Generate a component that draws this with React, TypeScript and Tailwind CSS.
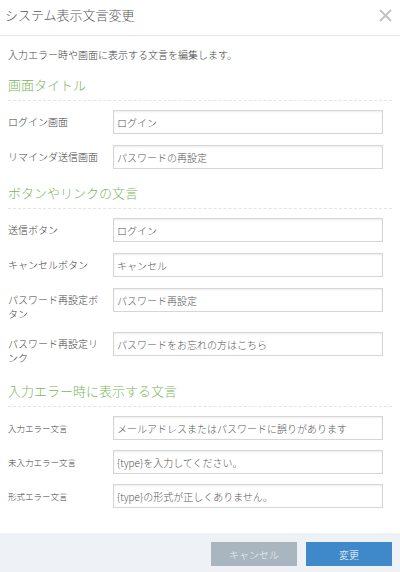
import React from 'react';

type Field = { label: string; value: string };

const screenFields: Field[] = [
  { label: 'ログイン画面', value: 'ログイン' },
  { label: 'リマインダ送信画面', value: 'パスワードの再設定' },
];

const buttonFields: Field[] = [
  { label: '送信ボタン', value: 'ログイン' },
  { label: 'キャンセルボタン', value: 'キャンセル' },
  { label: 'パスワード再設定ボタン', value: 'パスワード再設定' },
  { label: 'パスワード再設定リンク', value: 'パスワードをお忘れの方はこちら' },
];

const errorFields: Field[] = [
  { label: '入力エラー文言', value: 'メールアドレスまたはパスワードに誤りがあります' },
  { label: '未入力エラー文言', value: '{type}を入力してください。' },
  { label: '形式エラー文言', value: '{type}の形式が正しくありません。' },
];

function SectionTitle({ children }: { children: React.ReactNode }) {
  return (
    <h2 className="text-[13px] leading-[20px] font-light text-[#7ab65a] pb-[5px] border-b border-dashed border-[#e4e4e4]">
      {children}
    </h2>
  );
}

function Row({ field, small }: { field: Field; small?: boolean }) {
  return (
    <div className="flex items-start pr-[9px]">
      <label
        className={
          small
            ? 'w-[105px] shrink-0 pr-[8px] pt-[5px] text-[8.5px] leading-[14px] text-[#444]'
            : 'w-[105px] shrink-0 pr-[8px] pt-[5px] text-[10px] leading-[14px] text-[#444]'
        }
      >
        {field.label}
      </label>
      <input
        defaultValue={field.value}
        className="flex-1 min-w-0 h-[24px] px-[3px] text-[10px] font-light text-[#555] border border-[#d6d6d6] shadow-[inset_0_1px_2px_rgba(0,0,0,0.08)] outline-none"
      />
    </div>
  );
}

export default function App() {
  return (
    <div className="w-[400px] h-[572px] bg-white flex flex-col overflow-hidden font-['Noto_Sans_CJK_JP',sans-serif] font-light text-[#444]">
      {/* Header */}
      <div className="h-[36px] shrink-0 border-b border-[#e6e6e6] flex items-start justify-between pl-[5px] pr-[8px] pt-[6px]">
        <h1 className="text-[13px] leading-[18px] text-[#555]">システム表示文言変更</h1>
        <svg width="13" height="13" viewBox="0 0 13 13" className="mt-[3px]">
          <path d="M1 1L12 12M12 1L1 12" stroke="#c4c4c4" strokeWidth="2" />
        </svg>
      </div>

      {/* Body */}
      <div className="px-[8px] pt-[11px] pb-[25px]">
        <p className="text-[10px] leading-[16px] text-[#444]">入力エラー時や画面に表示する文言を編集します。</p>

        <div className="mt-[12px]">
          <SectionTitle>画面タイトル</SectionTitle>
          <div className="mt-[9px] flex flex-col gap-[11px]">
            {screenFields.map((f) => (
              <Row key={f.label} field={f} />
            ))}
          </div>
        </div>

        <div className="mt-[14px]">
          <SectionTitle>ボタンやリンクの文言</SectionTitle>
          <div className="mt-[9px] flex flex-col gap-[11px]">
            {buttonFields.map((f) => (
              <Row key={f.label} field={f} />
            ))}
          </div>
        </div>

        <div className="mt-[16px]">
          <SectionTitle>入力エラー時に表示する文言</SectionTitle>
          <div className="mt-[9px] flex flex-col gap-[10px]">
            {errorFields.map((f) => (
              <Row key={f.label} field={f} small />
            ))}
          </div>
        </div>
      </div>

      {/* Footer */}
      <div className="flex-1 bg-[#eef1f5] flex justify-end items-start gap-[9px] pr-[8px] pt-[9px]">
        <button className="w-[86px] h-[24px] bg-[#aab6bf] text-[#eef2f4] text-[10px]">キャンセル</button>
        <button className="w-[86px] h-[24px] bg-[#3f88c9] text-white text-[10px]">変更</button>
      </div>
    </div>
  );
}
